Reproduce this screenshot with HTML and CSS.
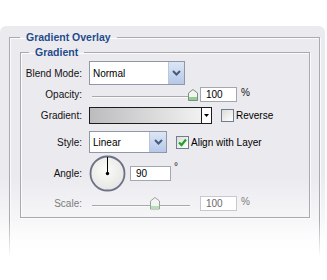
FILE: index.html
```html
<!DOCTYPE html>
<html lang="en">
<head>
    <meta charset="UTF-8">
    <title>Gradient Overlay</title>
    <link rel="stylesheet" href="styles.css">
</head>
<body>
    <div class="panel">
        <fieldset class="outer">
            <legend>Gradient Overlay</legend>
            <fieldset class="inner">
                <legend>Gradient</legend>

                <div class="row rowBlend">
                    <span class="lbl">Blend Mode:</span>
                    <div class="select selBlend">
                        <span class="val">Normal</span>
                        <span class="btn"><svg width="9" height="6" viewBox="0 0 9 6"><polyline points="1,1 4.5,4.5 8,1" fill="none" stroke="#465a7e" stroke-width="2"/></svg></span>
                    </div>
                </div>

                <div class="row rowOpacity">
                    <span class="lbl">Opacity:</span>
                    <div class="slider">
                        <div class="track"></div>
                        <svg class="thumb thumbOpacity" width="10" height="12" viewBox="0 0 10 12">
                            <path d="M0.5 4 L5 0.5 L9.5 4 V11.5 H0.5 Z" fill="#f2f4f2" stroke="#7f8c80"/>
                            <rect x="1" y="8" width="8" height="3" fill="#8fcf93"/>
                        </svg>
                    </div>
                    <div class="num">100</div>
                    <span class="unit">%</span>
                </div>

                <div class="row rowGradient">
                    <span class="lbl">Gradient:</span>
                    <div class="gradBox">
                        <div class="gradFill"></div>
                        <div class="gradArrow"><svg width="5" height="3" viewBox="0 0 5 3"><polygon points="0,0 5,0 2.5,3" fill="#000"/></svg></div>
                    </div>
                    <span class="check checkGap"></span>
                    <span class="checkText">Reverse</span>
                </div>

                <div class="row rowStyle">
                    <span class="lbl">Style:</span>
                    <div class="select selStyle">
                        <span class="val">Linear</span>
                        <span class="btn"><svg width="9" height="6" viewBox="0 0 9 6"><polyline points="1,1 4.5,4.5 8,1" fill="none" stroke="#465a7e" stroke-width="2"/></svg></span>
                    </div>
                    <span class="check checkGap"><svg width="11" height="11" viewBox="0 0 11 11"><polyline points="2,5.5 4.5,8 9,2.5" fill="none" stroke="#22a12c" stroke-width="2.2"/></svg></span>
                    <span class="checkText">Align with Layer</span>
                </div>

                <div class="row rowAngle">
                    <span class="lbl">Angle:</span>
                    <svg class="dial" width="37" height="37" viewBox="0 0 37 37">
                        <defs>
                            <radialGradient id="dialFill" cx="0.45" cy="0.4" r="0.6">
                                <stop offset="0" stop-color="#fbfbf8"/>
                                <stop offset="1" stop-color="#e6e6e4"/>
                            </radialGradient>
                        </defs>
                        <circle cx="18.5" cy="18.5" r="17" fill="url(#dialFill)" stroke="#6b7086" stroke-width="1.8"/>
                        <line x1="18.5" y1="18.5" x2="18.5" y2="2" stroke="#000" stroke-width="1"/>
                        <circle cx="18.5" cy="18.5" r="1.7" fill="#000"/>
                    </svg>
                    <div class="num numAngle">90</div>
                    <span class="unit">&deg;</span>
                </div>

                <div class="row rowScale">
                    <span class="lbl">Scale:</span>
                    <div class="slider">
                        <div class="track"></div>
                        <svg class="thumb thumbScale" width="10" height="13" viewBox="0 0 10 13">
                            <path d="M0.5 4 L5 0.5 L9.5 4 V12 H0.5 Z" fill="#f3f3f3" stroke="#9aa29b"/>
                            <rect x="1" y="9" width="8" height="2.5" fill="#b6dfb8"/>
                        </svg>
                    </div>
                    <div class="num">100</div>
                    <span class="unit">%</span>
                </div>
            </fieldset>
        </fieldset>
    </div>
</body>
</html>
```

FILE: styles.css
```css
/* Layer style panel */
body {
    margin: 0;
    background: #fff;
    font-family: "Liberation Sans", Arial, sans-serif;
    font-size: 10px;
    color: #111;
}

.panel {
    position: relative;
    margin-top: 26px;
    width: 325px;
    height: 254px;
    padding-top: 4px;
    box-sizing: border-box;
    border-radius: 6px 6px 0 0;
    background: linear-gradient(#ebeaef 0, #ebeaef 150px, #ffffff 228px);
}

/* white fade over the bottom of the panel */
.panel::after {
    content: "";
    position: absolute;
    left: 0;
    right: 0;
    bottom: 0;
    height: 61px;
    background: linear-gradient(rgba(255, 255, 255, 0), #fff 38px);
}

/* Group boxes */
fieldset {
    margin: 0;
    min-width: 0;
    border: 1px solid #a9a9ae;
    box-shadow: inset 1px 1px 0 #fbfbfc, 1px 1px 0 #fbfbfc;
}

legend {
    font-weight: bold;
    font-size: 10.5px;
    line-height: 14px;
    color: #1f4b8a;
    padding: 0 6px;
}

.outer {
    margin: 0 5px 0 9px;
    padding: 1px 9px 40px 10px;
    border-bottom: none;
}

.inner {
    padding: 2px 0 6px 0;
}

.inner legend {
    margin-left: 8px;
}

/* Rows */
.row {
    display: flex;
    align-items: center;
}

.lbl {
    width: 61px;
    margin-right: 7px;
    text-align: right;
    flex-shrink: 0;
}

.rowBlend { height: 24px; }
.rowOpacity { height: 15px; margin-top: 2px; }
.rowGradient { height: 17px; margin-top: 5px; }
.rowStyle { height: 22px; margin-top: 7px; }
.rowAngle { height: 37px; margin-top: 2px; }
.rowScale { height: 15px; margin-top: 4px; color: #7c7c7c; }

/* Drop downs */
.select {
    display: flex;
    height: 100%;
    box-sizing: border-box;
    border: 1px solid #9097a6;
    background: #fff;
}

.selBlend { width: 96px; }
.selStyle { width: 78px; }

.select .val {
    flex: 1;
    padding-left: 3px;
    display: flex;
    align-items: center;
    color: #000;
}

.select .btn {
    width: 15px;
    display: flex;
    align-items: center;
    justify-content: center;
    border-left: 1px solid #b9c6dd;
    background: linear-gradient(#dde6f5, #b5c8e8);
}

.selStyle .btn {
    width: 16px;
}

/* Sliders */
.slider {
    position: relative;
    width: 108px;
    height: 15px;
}

.track {
    margin: 9px 0 0 3px;
    width: 98px;
    height: 1px;
    background: #a8a8ab;
    border-bottom: 1px solid #fafafa;
}

.thumb {
    position: absolute;
    top: 2px;
}

.thumbOpacity { left: 99px; }
.thumbScale { left: 61px; top: 1px; }

/* Number fields */
.num {
    width: 37px;
    height: 15px;
    margin-left: 3px;
    box-sizing: border-box;
    border: 1px solid #a3a8b0;
    background: #fff;
    padding-left: 5px;
    line-height: 13px;
    color: #000;
}

.numAngle {
    width: 41px;
    margin-left: 4px;
}

.rowScale .num {
    border-color: #c9c9cc;
    color: #6a6a6a;
}

.unit {
    margin-left: 4px;
    align-self: flex-start;
    line-height: 11px;
}

.rowAngle .unit {
    margin-left: 3px;
    margin-top: 6px;
}

/* Gradient picker */
.gradBox {
    display: flex;
    width: 123px;
    height: 17px;
    box-sizing: border-box;
    border: 1px solid #1c1c1c;
}

.gradFill {
    flex: 1;
    border-right: 1px solid #1c1c1c;
    background: linear-gradient(to right, #bcbcbf, #f1f1f1);
}

.gradArrow {
    width: 9px;
    background: #fff;
    display: flex;
    align-items: center;
    justify-content: center;
}

/* Check boxes */
.check {
    width: 13px;
    height: 13px;
    box-sizing: border-box;
    border: 1px solid #6f7d92;
    background: linear-gradient(135deg, #dcdcd7, #ffffff);
    display: flex;
    align-items: center;
    justify-content: center;
}

.checkGap {
    margin-left: 9px;
}

.checkText {
    margin-left: 2px;
    color: #000;
}
```
